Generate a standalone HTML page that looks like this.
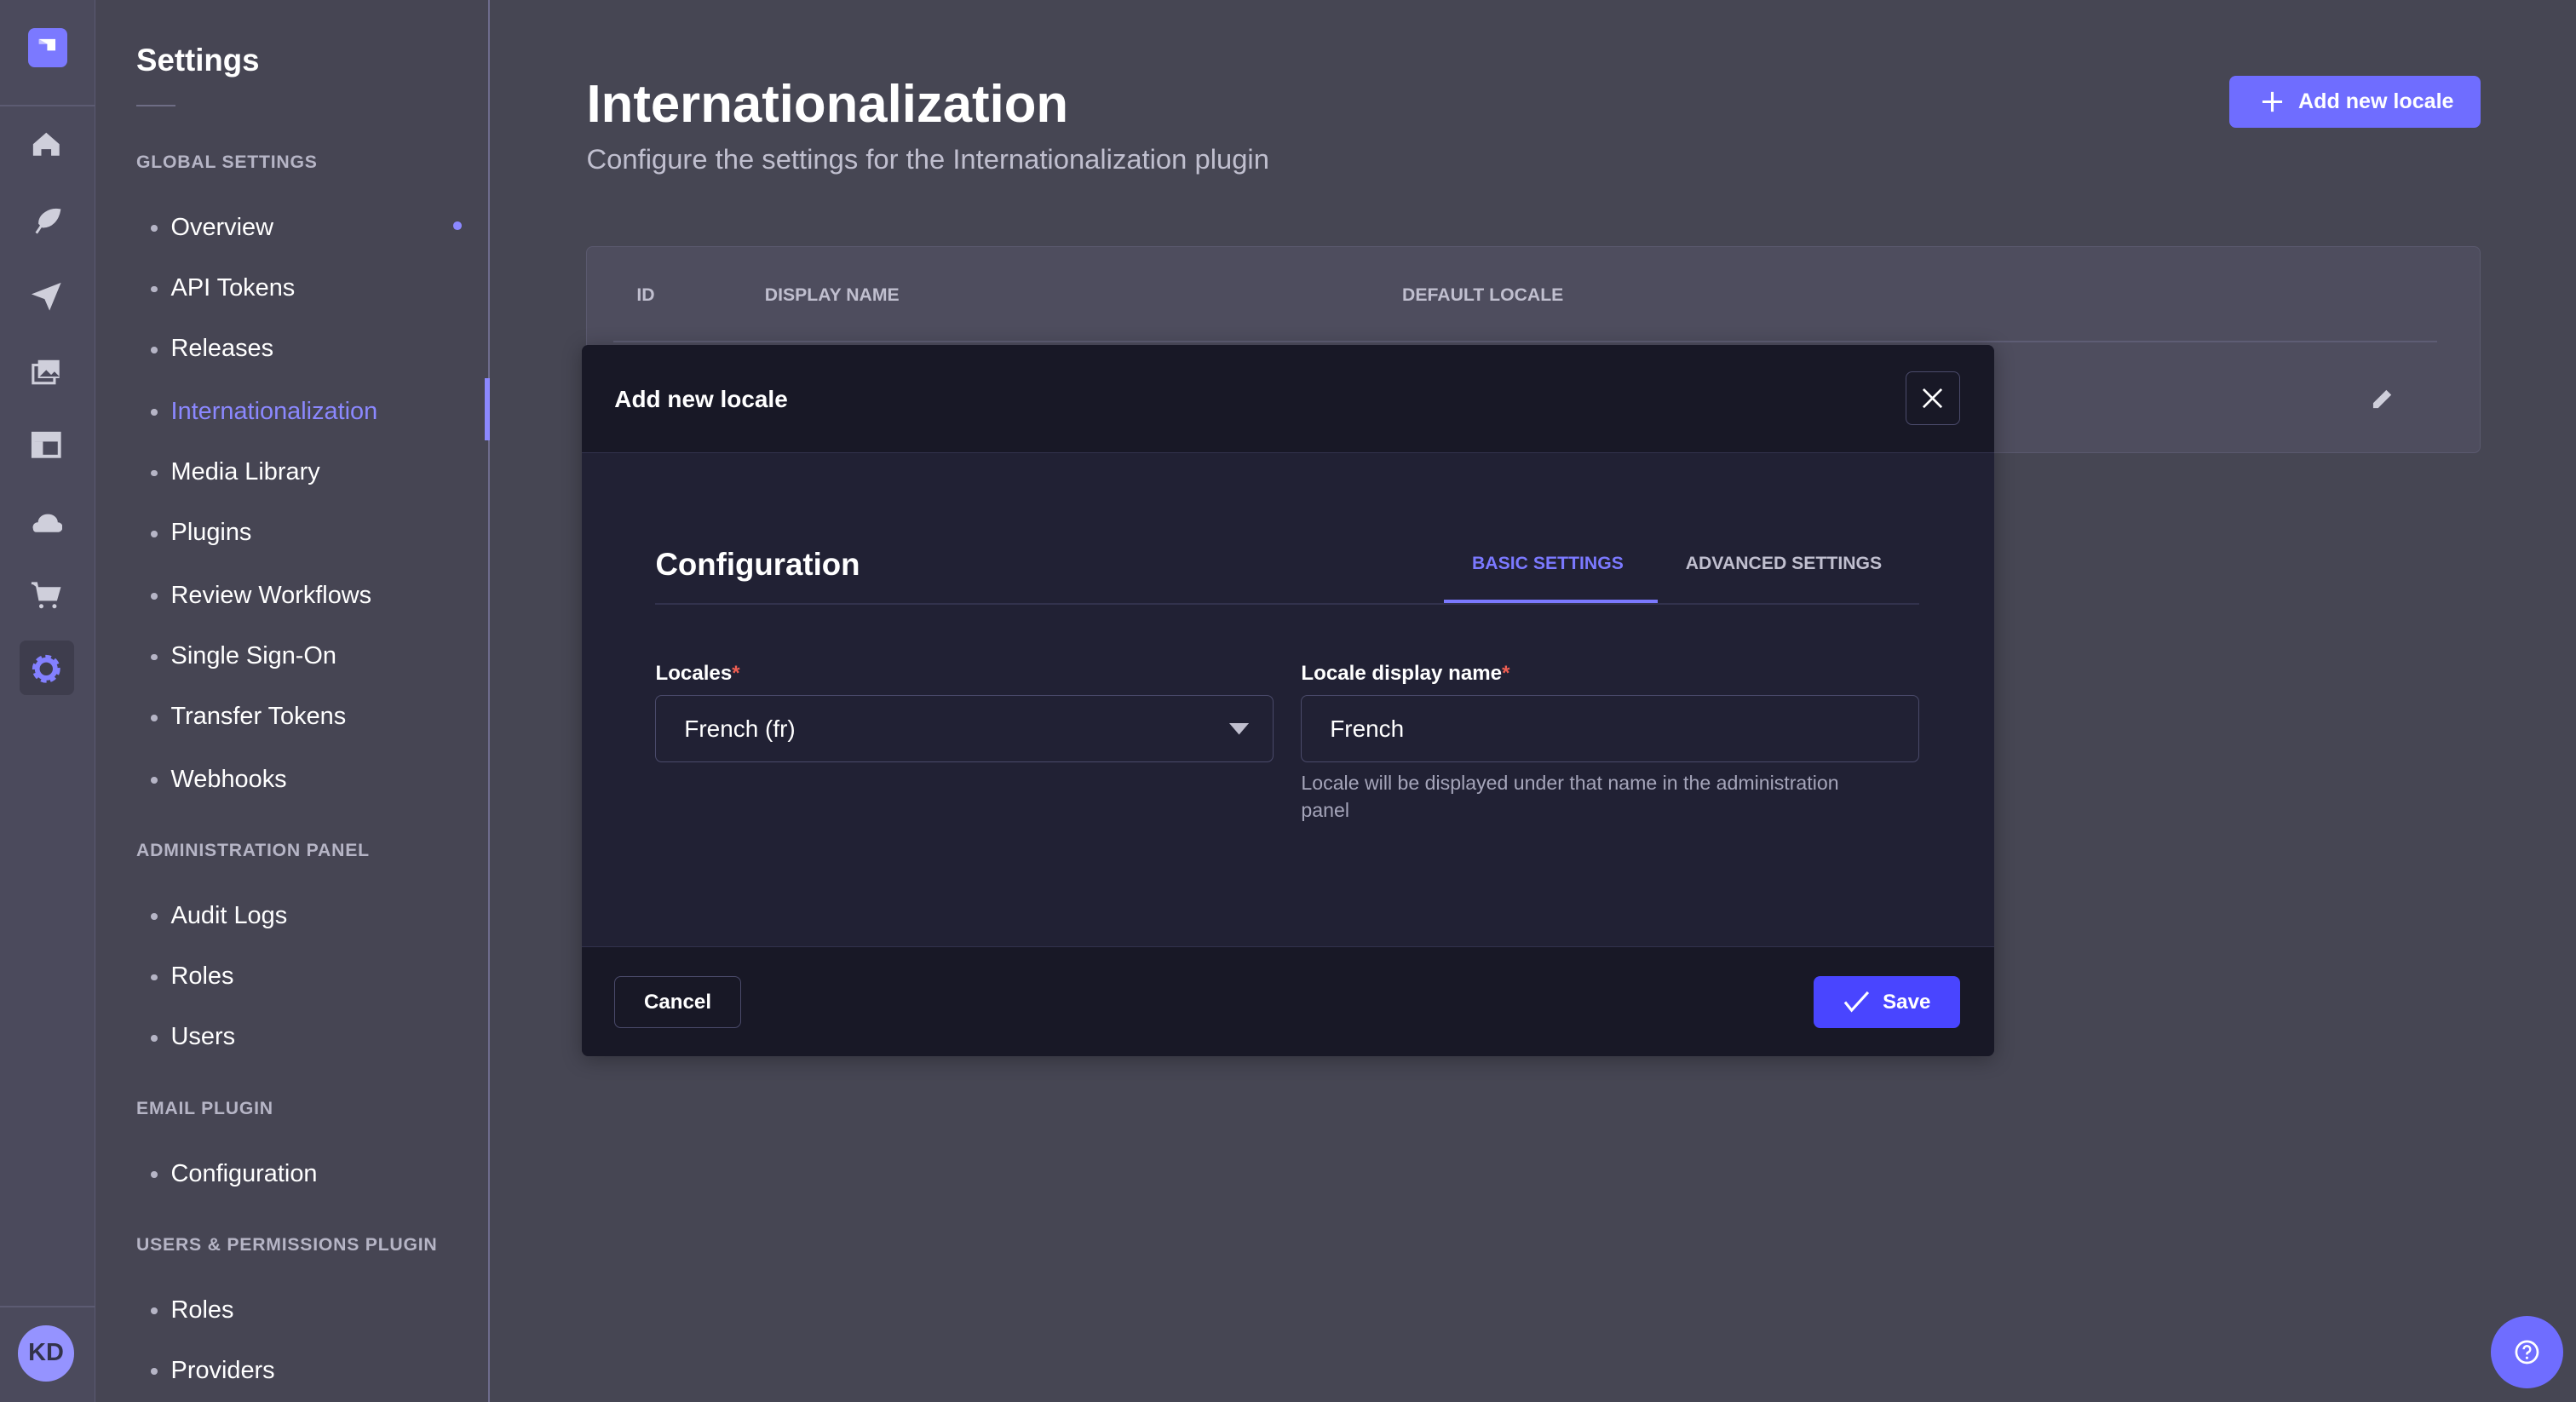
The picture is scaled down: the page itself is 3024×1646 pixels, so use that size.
<!DOCTYPE html>
<html><head><meta charset="utf-8"><style>
*{box-sizing:border-box;margin:0;padding:0}
html,body{width:3024px;height:1646px;overflow:hidden;background:#464653}
body{font-family:"Liberation Sans",sans-serif}
#w{zoom:1.92857;width:1568px;height:854px;position:relative;background:#464653;color:#fff}
.abs{position:absolute}
#ib{left:0;top:0;width:58px;height:854px;background:#4b4a5c;border-right:1px solid #5a5a72}
#sn{left:58px;top:0;width:240px;height:854px;background:#464553;border-right:1.5px solid #6e6c8c}
.sec{position:absolute;left:25px;font-size:11px;letter-spacing:.4px;color:#b6b5c6;font-weight:bold}
.it{position:absolute;left:46px;font-size:15px;color:#fff}
.it:before{content:"";position:absolute;left:-12px;top:7px;width:4px;height:4px;border-radius:50%;background:#b6b5c6}
.ic{position:absolute;left:18px;width:20px;height:20px}
</style></head><body><div id="w">
<div id="ib" class="abs">
 <div class="abs" style="left:17px;top:17px;width:24px;height:24px;border-radius:4px;background:#7b79ff"></div>
 <svg class="abs" style="left:21px;top:22px" width="16" height="14" viewBox="0 0 16 14"><path d="M3 2h10v7H8V5H3z" fill="#fff"/><path d="M3 5h5l-5 -3z" fill="#c8c6ff"/></svg>
 <div class="abs" style="left:0;top:64px;width:58px;height:1px;background:#5c5b72"></div>
 <svg class="ic" style="top:78px" viewBox="0 0 20 20"><path d="M2 10L10 3l8 7v7h-5v-4H7v4H2z" fill="#cfcfdb"/></svg>
 <svg class="ic" style="top:124px" viewBox="0 0 20 20"><path d="M4 18L8 12M6 12c0-5 6-9 12-8-1 6-5 10-10 10l-2-2z" fill="#cfcfdb" stroke="#cfcfdb" stroke-width="1.5"/></svg>
 <svg class="ic" style="top:170px" viewBox="0 0 20 20"><path d="M1 9L19 2 12 19 9 12z" fill="#cfcfdb"/></svg>
 <svg class="ic" style="top:216px" viewBox="0 0 20 20"><rect x="2" y="6" width="13" height="11" fill="none" stroke="#cfcfdb" stroke-width="1.6"/><rect x="5" y="3" width="13" height="11" fill="#cfcfdb"/><path d="M6 13l4-4 3 3 2-2 3 3z" fill="#4b4a5c"/></svg>
 <svg class="ic" style="top:261px" viewBox="0 0 20 20"><rect x="2" y="3" width="16" height="14" fill="none" stroke="#cfcfdb" stroke-width="2"/><rect x="2" y="3" width="16" height="5" fill="#cfcfdb"/><rect x="2" y="8" width="6" height="9" fill="#cfcfdb"/></svg>
 <svg class="ic" style="top:307px" viewBox="0 0 20 20"><path d="M2 15a3 3 0 0 1 3-4 6 5 0 0 1 12 0 2 2 0 0 1 0 6H4c-2 0-2-2-2-2z" fill="#cfcfdb"/></svg>
 <svg class="ic" style="top:352px" viewBox="0 0 20 20"><path d="M1 3h3l2 10h10l2-7H5" fill="#cfcfdb" stroke="#cfcfdb" stroke-width="1.4"/><circle cx="7" cy="17" r="1.3" fill="#cfcfdb"/><circle cx="15" cy="17" r="1.3" fill="#cfcfdb"/></svg>
 <div class="abs" style="left:12px;top:390px;width:33px;height:33px;border-radius:4px;background:#3e3d4d"></div>
 <svg class="ic" style="top:397px" viewBox="0 0 20 20"><circle cx="10" cy="10" r="6.5" fill="none" stroke="#8380ff" stroke-width="4" stroke-dasharray="3 2"/><circle cx="10" cy="10" r="5.5" fill="none" stroke="#8380ff" stroke-width="3"/></svg>
 <div class="abs" style="left:0;top:795px;width:58px;height:1px;background:#5c5b72"></div>
 <div class="abs" style="left:11px;top:807px;width:34px;height:34px;border-radius:50%;background:#9593ff;color:#32324a;font-size:15px;font-weight:bold;text-align:center;line-height:34px">KD</div>
</div>
<div id="sn" class="abs">
 <div class="abs" style="left:25px;top:26px;font-size:19px;font-weight:bold">Settings</div>
 <div class="abs" style="left:25px;top:64px;width:24px;height:1px;background:#6e6d85"></div>
 <div class="sec" style="top:93px">GLOBAL SETTINGS</div>
 <div class="it" style="top:130px">Overview</div>
 <div class="abs" style="left:218px;top:135px;width:5px;height:5px;border-radius:50%;background:#8b88ff"></div>
 <div class="it" style="top:167px">API Tokens</div>
 <div class="it" style="top:204px">Releases</div>
 <div class="it" style="top:242px;color:#8b88ff">Internationalization</div>
 <div class="abs" style="left:237px;top:230px;width:3px;height:38px;background:#8b88ff"></div>
 <div class="it" style="top:279px">Media Library</div>
 <div class="it" style="top:316px">Plugins</div>
 <div class="it" style="top:354px">Review Workflows</div>
 <div class="it" style="top:391px">Single Sign-On</div>
 <div class="it" style="top:428px">Transfer Tokens</div>
 <div class="it" style="top:466px">Webhooks</div>
 <div class="sec" style="top:512px">ADMINISTRATION PANEL</div>
 <div class="it" style="top:549px">Audit Logs</div>
 <div class="it" style="top:586px">Roles</div>
 <div class="it" style="top:623px">Users</div>
 <div class="sec" style="top:669px">EMAIL PLUGIN</div>
 <div class="it" style="top:706px">Configuration</div>
 <div class="sec" style="top:752px">USERS &amp; PERMISSIONS PLUGIN</div>
 <div class="it" style="top:789px">Roles</div>
 <div class="it" style="top:826px">Providers</div>
</div>
<div class="abs" style="left:357px;top:45px;font-size:32px;font-weight:bold">Internationalization</div>
<div class="abs" style="left:357px;top:87px;font-size:17px;color:#c0bfcf">Configure the settings for the Internationalization plugin</div>
<div class="abs" style="left:1357px;top:46px;width:153px;height:32px;border-radius:4px;background:#6f6dff;font-size:13px;font-weight:bold;line-height:32px;padding-left:42px">Add new locale</div>
<svg class="abs" style="left:1376px;top:55px" width="14" height="14"><path d="M7 1v12M1 7h12" stroke="#fff" stroke-width="1.6"/></svg>
<div class="abs" style="left:357px;top:150px;width:1153px;height:126px;border-radius:4px;background:#4e4d5e;border:1px solid #5a596e">
 <div class="abs" style="left:30px;top:23px;font-size:11px;font-weight:bold;color:#c0bfcf">ID</div>
 <div class="abs" style="left:108px;top:23px;font-size:11px;font-weight:bold;color:#c0bfcf">DISPLAY NAME</div>
 <div class="abs" style="left:496px;top:23px;font-size:11px;font-weight:bold;color:#c0bfcf">DEFAULT LOCALE</div>
 <div class="abs" style="left:16px;top:57px;width:1110px;height:1px;background:#5e5d74"></div>
 <svg class="abs" style="left:1086px;top:85px" width="14" height="14"><path d="M1 13v-3l8-8 3 3-8 8z" fill="#cfcfdb"/></svg>
</div>
<div class="abs" style="left:354px;top:210px;width:860px;height:433px;border-radius:4px;background:#212134;overflow:hidden;box-shadow:0 2px 12px rgba(0,0,0,.3)">
 <div class="abs" style="left:0;top:0;width:860px;height:66px;background:#181826;border-bottom:1px solid #32324d"></div>
 <div class="abs" style="left:20px;top:25px;font-size:14.5px;font-weight:bold">Add new locale</div>
 <div class="abs" style="left:806px;top:16px;width:33px;height:33px;border:1px solid #4a4a6a;border-radius:4px"></div>
 <svg class="abs" style="left:816px;top:26px" width="13" height="13"><path d="M1 1l11 11M12 1L1 12" stroke="#fff" stroke-width="1.4"/></svg>
 <div class="abs" style="left:45px;top:123px;font-size:19px;font-weight:bold">Configuration</div>
 <div class="abs" style="left:542px;top:127px;font-size:11px;font-weight:bold;color:#7b79ff">BASIC SETTINGS</div>
 <div class="abs" style="left:672px;top:127px;font-size:11px;font-weight:bold;color:#c0bfcf">ADVANCED SETTINGS</div>
 <div class="abs" style="left:45px;top:157px;width:769px;height:1px;background:#32324d"></div>
 <div class="abs" style="left:525px;top:155px;width:130px;height:2px;background:#7b79ff"></div>
 <div class="abs" style="left:45px;top:193px;font-size:12.5px;font-weight:bold">Locales<span style="color:#ee5e52">*</span></div>
 <div class="abs" style="left:438px;top:193px;font-size:12.5px;font-weight:bold">Locale display name<span style="color:#ee5e52">*</span></div>
 <div class="abs" style="left:45px;top:213px;width:376px;height:41px;border:1px solid #4a4a6a;border-radius:4px;font-size:14.5px;line-height:40px;padding-left:17px">French (fr)</div>
 <svg class="abs" style="left:394px;top:230px" width="12" height="8"><path d="M0 0h12L6 7z" fill="#c0bfcf"/></svg>
 <div class="abs" style="left:438px;top:213px;width:376px;height:41px;border:1px solid #4a4a6a;border-radius:4px;font-size:14.5px;line-height:40px;padding-left:17px">French</div>
 <div class="abs" style="left:438px;top:258px;width:376px;font-size:12px;line-height:17px;color:#a5a5ba">Locale will be displayed under that name in the administration<br>panel</div>
 <div class="abs" style="left:0;top:366px;width:860px;height:67px;background:#181826;border-top:1px solid #32324d"></div>
 <div class="abs" style="left:20px;top:384px;width:77px;height:32px;border:1px solid #4a4a6a;border-radius:4px;font-size:12.5px;font-weight:bold;line-height:31px;text-align:center">Cancel</div>
 <div class="abs" style="left:750px;top:384px;width:89px;height:32px;border-radius:4px;background:#4945ff;font-size:12.5px;font-weight:bold;line-height:32px;padding-left:42px">Save</div>
 <svg class="abs" style="left:768px;top:393px" width="16" height="14"><path d="M1 7l4 5L15 1" stroke="#fff" stroke-width="1.6" fill="none"/></svg>
</div>
<div class="abs" style="left:1516px;top:801px;width:44px;height:44px;border-radius:50%;background:#6f6dff"></div>
<svg class="abs" style="left:1530px;top:815px" width="16" height="16"><circle cx="8" cy="8" r="6.5" fill="none" stroke="#fff" stroke-width="1.4"/><path d="M6 6.3a2 2 0 1 1 2.5 1.9c-.5.2-.5.6-.5 1.3" fill="none" stroke="#fff" stroke-width="1.3"/><circle cx="8" cy="11.5" r=".8" fill="#fff"/></svg>
</div></body></html>
